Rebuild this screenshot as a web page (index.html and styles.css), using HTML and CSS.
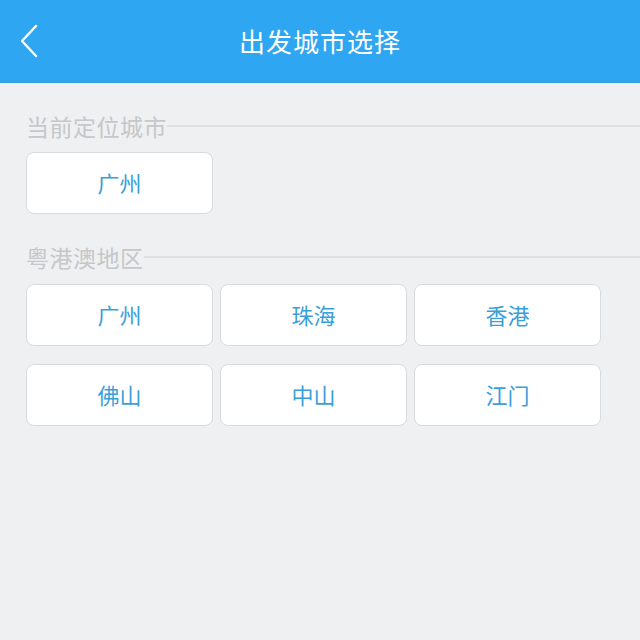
FILE: index.html
```html
<!DOCTYPE html>
<html lang="zh-CN">

<head>
    <meta charset="UTF-8">
    <meta name="viewport" content="width=device-width, initial-scale=1.0">
    <title>出发城市选择</title>
    <link rel="stylesheet" href="styles.css">
</head>

<body>
    <div class="header">
        <a class="back" href="#">
            <svg width="20" height="34" viewBox="0 0 20 34">
                <polyline points="17,2 3,17 17,32" fill="none" stroke="#fff" stroke-width="2.4" stroke-linecap="round" stroke-linejoin="round" />
            </svg>
        </a>
        <h1>出发城市选择</h1>
    </div>

    <div class="content">
        <div class="section-title"><span>当前定位城市</span></div>
        <div class="city-grid">
            <a class="city" href="#">广州</a>
        </div>

        <div class="section-title"><span>粤港澳地区</span></div>
        <div class="city-grid">
            <a class="city" href="#">广州</a>
            <a class="city" href="#">珠海</a>
            <a class="city" href="#">香港</a>
            <a class="city" href="#">佛山</a>
            <a class="city" href="#">中山</a>
            <a class="city" href="#">江门</a>
        </div>
    </div>
</body>

</html>
```

FILE: styles.css
```css
body {
    margin: 0;
    font-family: "Noto Sans CJK SC", "Noto Sans", sans-serif;
    background-color: #eff0f2;
    height: 640px;
}

.header {
    position: relative;
    height: 82px;
    background-color: #2ea6f1;
    display: flex;
    align-items: center;
    justify-content: center;
    border-bottom: 1px solid #3a9ad8;
}

.header h1 {
    margin: 0 0 2px;
    color: #fff;
    font-size: 26px;
    font-weight: normal;
    letter-spacing: 1px;
}

.back {
    position: absolute;
    left: 19px;
    top: 24px;
    display: block;
    line-height: 0;
}

.content {
    padding: 28px 0 0 26px;
}

.section-title {
    display: flex;
    align-items: center;
    color: #c6c7c9;
    font-size: 23px;
    line-height: 30px;
    letter-spacing: 0.5px;
}

.section-title::after {
    content: "";
    flex: 1;
    height: 2px;
    background-color: #dfe0e2;
}

.city-grid {
    display: grid;
    grid-template-columns: repeat(3, 187px);
    column-gap: 7px;
    row-gap: 18px;
    margin: 11px 0 28px;
}

.city-grid + .section-title + .city-grid {
    margin-top: 12px;
}

.city {
    display: flex;
    align-items: center;
    justify-content: center;
    box-sizing: border-box;
    height: 62px;
    padding-bottom: 3px;
    background-color: #fff;
    border: 1px solid #d9dadc;
    border-radius: 8px;
    color: #3a9fd9;
    font-size: 22px;
    text-decoration: none;
}
```
